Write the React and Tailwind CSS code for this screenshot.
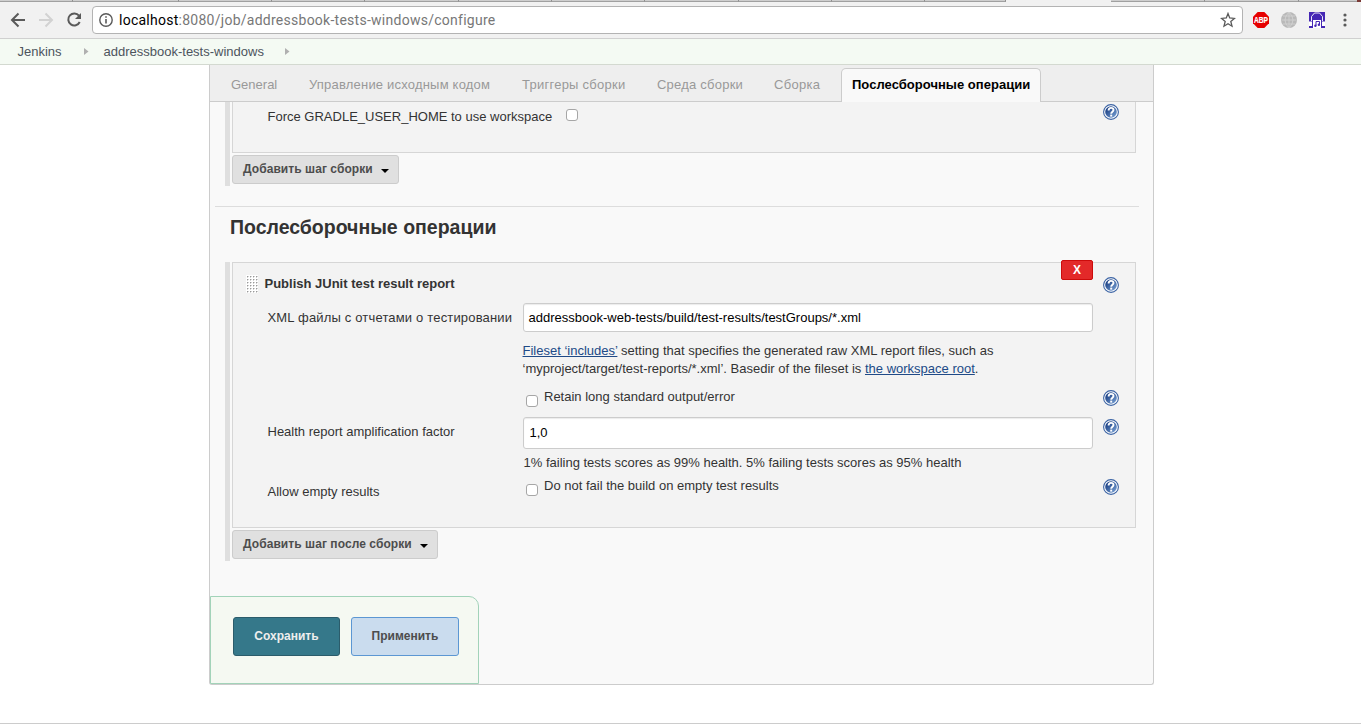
import React from "react";

const Help = ({ className }) => (
  <svg viewBox="0 0 16 16" className={"block h-4 w-4 shrink-0 " + className}>
    <defs>
      <linearGradient id="helpFill" x1="0" y1="0" x2="1" y2="1">
        <stop offset="0.2" stopColor="#1f4488" />
        <stop offset="1" stopColor="#7fa8da" />
      </linearGradient>
    </defs>
    <circle cx="8" cy="8" r="7.400" fill="#fff" stroke="#3a62a3" strokeWidth="1.100" />
    <circle cx="8" cy="8" r="5.800" fill="url(#helpFill)" />
    <path d="M5.600 6.500C5.600 4.600 6.700 3.900 8 3.900s2.500.8 2.500 2.200C10.500 7.700 8.200 7.700 8.200 9.700" fill="none" stroke="#fff" strokeWidth="1.900" />
    <rect x="7.200" y="10.600" width="2" height="2" fill="#fff" />
  </svg>
);

const Check = ({ className }) => (
  <span className={"block h-3 w-3 shrink-0 rounded-[3px] border border-[#a6a6a6] bg-white " + className} />
);

const Crumb = ({ className }) => (
  <svg viewBox="0 0 5 7" className={"h-[7px] w-[5px] shrink-0 " + className}>
    <path d="M0 0L4.500 3.500L0 7Z" fill="#b0b0b0" />
  </svg>
);

const Caret = ({ className }) => (
  <svg viewBox="0 0 8 4" className={"h-1 w-2 shrink-0 " + className}>
    <path d="M0 0H8L4 4Z" fill="#000" />
  </svg>
);

const tabSeams = ["w-[73px]", "w-[106px]", "w-[93px]", "w-[93px]", "w-[94px]", "w-[93px]", "w-[93px]", "w-[94px]", "w-[93px]", "w-[93px]", "w-[81px]"];

function Browser() {
  return (
    <header className="flex h-[39px] shrink-0 flex-col border-b border-[#d0d0d0] bg-[#f1f1f1]">
      <div className="flex h-[2px] shrink-0">
        {tabSeams.map((w, i) => (
          <div key={i} className={"h-[2px] shrink-0 border-r border-b border-r-[#8f8f8f] border-b-[#a0a0a0] bg-[#cecece] " + w} />
        ))}
        <div className="w-[105px] shrink-0" />
        <div className="h-[2px] w-[94px] shrink-0 border-r border-b border-r-[#8f8f8f] border-b-[#a0a0a0] bg-[#cecece]" />
        <div className="h-[2px] w-[94px] shrink-0 border-r border-b border-r-[#8f8f8f] border-b-[#a0a0a0] bg-[#cecece]" />
        <div className="h-[2px] w-[58px] shrink-0 border-b border-[#a0a0a0] bg-[#cecece]" />
        <div className="h-[2px] w-1 bg-[#7b3a36]" />
      </div>
      <div className="flex pt-1">
        <svg viewBox="0 0 90 28" className="h-7 w-[90px] shrink-0" fill="none" strokeWidth="2">
          <path d="M25 14H12M18.500 7.500L12 14L18.500 20.500" stroke="#5a5a5a" />
          <path d="M39 14H52M45.500 7.500L52 14L45.500 20.500" stroke="#d2d2d2" />
          <path d="M79 9.700A6 6 0 1 0 79.700 16" stroke="#5a5a5a" />
          <path d="M81 7V13H75Z" fill="#5a5a5a" />
        </svg>
        <div className="ml-[2px] flex h-7 w-[1151px] shrink-0 items-center rounded-[4px] border border-[#b3b3b3] bg-white">
          <svg viewBox="0 0 14 14" className="ml-[6px] h-[14px] w-[14px] shrink-0" fill="none" stroke="#5a5a5a" strokeWidth="1.400">
            <circle cx="7" cy="7" r="6.200" />
            <path d="M7 6V10.500M7 3.300V4.800" strokeWidth="1.600" />
          </svg>
          <span className="ml-[6px] font-[Roboto,sans-serif] text-[14px] leading-[20px] tracking-[0.26px] whitespace-nowrap text-[#777]">
            <span className="text-black">localhost</span>:8080/job/addressbook-tests-windows/configure
          </span>
          <svg viewBox="0 0 16 16" className="mr-[6px] ml-auto h-4 w-4" fill="none" stroke="#5a5a5a" strokeWidth="1.300">
            <path d="M8 1.500L9.700 6L14.400 6.400L10.800 9.500L12 14.200L8 11.700L4 14.200L5.200 9.500L1.600 6.400L6.300 6Z" />
          </svg>
        </div>
        <svg viewBox="0 0 118 28" className="h-7 w-[118px] shrink-0">
          <path d="M14.700 6H21.300L26 10.700V17.300L21.300 22H14.700L10 17.300V10.700Z" fill="#e60000" />
          <text x="18" y="17" textAnchor="middle" fontFamily="Liberation Sans" fontWeight="700" fontSize="8.500" textLength="14" lengthAdjust="spacingAndGlyphs" fill="#fff" stroke="#fff" strokeWidth="0.200">ABP</text>
          <circle cx="46" cy="14" r="8" fill="#b9b9b9" />
          <path d="M38.500 14H53.500M40 10H52M40 18H52M46 6V22M46 6Q38 14 46 22M46 6Q54 14 46 22" fill="none" stroke="#d4d4d4" strokeWidth="0.800" />
          <rect x="66" y="6" width="16" height="16" fill="#4527b4" />
          <path d="M68.500 15V10.500L71.500 7H76.500L79.500 10.500V15" fill="none" stroke="#fff" strokeWidth="0.900" />
          <path d="M66 15.500H69V20H66ZM79 15.500H82V20H79Z" fill="#fff" />
          <path d="M70 14H78V22H70Z" fill="#fff" />
          <path d="M73 19.500V15.500H76.500V18.500" fill="none" stroke="#4527b4" />
          <circle cx="72.400" cy="19.700" r="1.200" fill="#4527b4" />
          <circle cx="75.900" cy="18.800" r="1.200" fill="#4527b4" />
          <g fill="#5a5a5a"><circle cx="102" cy="9" r="1.600" /><circle cx="102" cy="14" r="1.600" /><circle cx="102" cy="19" r="1.600" /></g>
        </svg>
      </div>
    </header>
  );
}

export default function App() {
  return (
    <div className="flex h-[724px] w-[1361px] flex-col overflow-hidden border-b border-[#ccc] bg-white font-['Liberation_Sans',Arial,sans-serif] text-[13px] leading-[18px] whitespace-nowrap text-[#333]">
      <Browser />
      <nav className="flex h-[26px] shrink-0 items-center border-b border-[#d3d9d0] bg-[#f4faf3] pl-[17.5px] text-[#4d545d]">
        <span className="w-[44.5px]">Jenkins</span>
        <Crumb className="ml-[22px]" />
        <span className="ml-[14.5px] w-[161.5px]">addressbook-tests-windows</span>
        <Crumb className="ml-[20px]" />
      </nav>
      <main className="ml-[209px] flex h-[620px] w-[945px] shrink-0 flex-col rounded-b-[3px] border border-t-0 border-[#ccc] bg-[#f9f9f9]">
        <div className="flex h-[37px] shrink-0 border-b border-[#ccc] bg-[#eee] pt-[3px] leading-[34px] text-[#999]">
          <span className="ml-[21px] w-[78px]">General</span>
          <span className="w-[213px] tracking-[0.2px]">Управление исходным кодом</span>
          <span className="w-[135px] tracking-[0.25px]">Триггеры сборки</span>
          <span className="w-[117px] tracking-[0.23px]">Среда сборки</span>
          <span className="w-[67px] tracking-[0.3px]">Сборка</span>
          <span className="h-[34px] w-[200px] rounded-t-[5px] border border-b-0 border-[#ccc] bg-[#f9f9f9] pl-[10px] leading-[32px] font-bold tracking-[0.03px] text-black">Послесборочные операции</span>
        </div>

        <section className="ml-[15px] flex h-[84px] w-[911px] shrink-0 flex-col border-l-[5px] border-[#dfdfdf] pl-[2px]">
          <div className="flex h-[51px] shrink-0 border border-t-0 border-[#d6d6d6] bg-[#f3f3f3]">
            <span className="mt-[6px] ml-[34.5px] w-[284.5px]">Force GRADLE_USER_HOME to use workspace</span>
            <Check className="mt-[7px] ml-[14px]" />
            <Help className="mt-[2px] mr-[16px] ml-auto" />
          </div>
          <button className="mt-[2px] flex h-[29px] w-[167px] items-center rounded-[3px] border border-[#ccc] bg-[#e0e0e0] pl-[10px] text-[12px] font-bold text-[#4d4d4d]">
            <span className="-mt-[2px] w-[131px] text-left tracking-[0.07px]">Добавить шаг сборки</span>
            <Caret className="mt-[2px] ml-[7px]" />
          </button>
        </section>

        <h2 className="mt-[20px] ml-[5px] w-[924px] shrink-0 border-t border-[#ddd] pt-[8px] pl-[15px] text-[19.5px] leading-[24px] font-bold">Послесборочные операции</h2>

        <section className="mt-[23px] ml-[15px] flex h-[299px] w-[911px] shrink-0 flex-col border-l-[5px] border-[#dfdfdf] pl-[2px]">
          <div className="flex h-[266px] shrink-0 border border-[#d6d6d6] bg-[#f3f3f3]">
            <div className="flex w-[290px] shrink-0 flex-col">
              <div className="mt-[12px] flex">
                <svg viewBox="0 0 12 18" className="ml-[13px] h-[18px] w-3">
                  <defs>
                    <pattern id="grip" width="3" height="3" patternUnits="userSpaceOnUse">
                      <rect width="3" height="3" fill="#fff" />
                      <rect x="1" y="1" width="1" height="1" fill="#999" />
                      <path d="M2 1h1v1h-1zM1 2h1v1h-1z" fill="#d4d4d4" />
                    </pattern>
                  </defs>
                  <rect width="12" height="18" fill="url(#grip)" />
                </svg>
                <b className="ml-[6.5px]">Publish JUnit test result report</b>
              </div>
              <span className="mt-[16px] ml-[34.5px] tracking-[0.17px]">XML файлы с отчетами о тестировании</span>
              <span className="mt-[96px] ml-[34.5px]">Health report amplification factor</span>
              <span className="mt-[42px] ml-[34.5px]">Allow empty results</span>
            </div>
            <div className="flex w-[570px] shrink-0 flex-col">
              <button className="-mt-[3px] h-[20px] w-8 shrink-0 self-end rounded-[2px] border border-[#cc0b0b] bg-[#e32929] text-[12px] leading-[18px] font-bold text-white">X</button>
              <div className="mt-[23px] h-[29px] shrink-0 rounded-[3px] border border-[#ccc] bg-white pl-[4.5px] leading-[27px] text-black shadow-[inset_0_1px_1px_rgba(0,0,0,0.08)]">addressbook-web-tests/build/test-results/testGroups/*.xml</div>
              <p className="mt-[10px] -ml-[0.5px]">
                <a className="text-[#204a87] underline">Fileset ‘includes’</a> setting that specifies the generated raw XML report files, such as<br />
                ‘myproject/target/test-reports/*.xml’. Basedir of the fileset is <a className="text-[#204a87] underline">the workspace root</a>.
              </p>
              <div className="mt-[10px] flex h-[18px] shrink-0">
                <Check className="mt-[7px] ml-[3px]" />
                <span className="ml-[6px]">Retain long standard output/error</span>
              </div>
              <div className="mt-[11px] h-8 shrink-0 rounded-[3px] border border-[#ccc] bg-white pl-[5.5px] leading-[30px] text-black shadow-[inset_0_1px_1px_rgba(0,0,0,0.08)]">1,0</div>
              <p className="mt-[5px] pl-[0.5px]">1% failing tests scores as 99% health. 5% failing tests scores as 95% health</p>
              <div className="mt-[5px] flex h-[18px] shrink-0">
                <Check className="mt-[7px] ml-[3px]" />
                <span className="ml-[6px]">Do not fail the build on empty test results</span>
              </div>
            </div>
            <div className="flex flex-col pl-[10px]">
              <Help className="mt-[14px]" />
              <Help className="mt-[97px]" />
              <Help className="mt-[13px]" />
              <Help className="mt-[44px]" />
            </div>
          </div>
          <button className="mt-[2px] flex h-[29px] w-[206px] shrink-0 items-center rounded-[3px] border border-[#ccc] bg-[#e0e0e0] pl-[10px] text-[12px] font-bold text-[#4d4d4d]">
            <span className="-mt-[2px] w-[170px] text-left tracking-[0.07px]">Добавить шаг после сборки</span>
            <Caret className="mt-[2px] ml-[7px]" />
          </button>
        </section>

        <footer className="mt-[35px] flex h-[88px] w-[269px] shrink-0 gap-[11px] rounded-tr-[10px] border border-[#a2d3b9] bg-[#f5f9f2] pt-[20px] pl-[22px] text-[12px] font-bold">
          <button className="h-[39px] w-[107px] rounded-[3px] border border-[#2b5c6b] bg-[#35788a] pb-[2px] text-[#eee]">Сохранить</button>
          <button className="h-[39px] w-[108px] rounded-[3px] border border-[#5c97d3] bg-[#cadcee] pb-[2px] text-[#4d4d4d]">Применить</button>
        </footer>
      </main>
    </div>
  );
}
